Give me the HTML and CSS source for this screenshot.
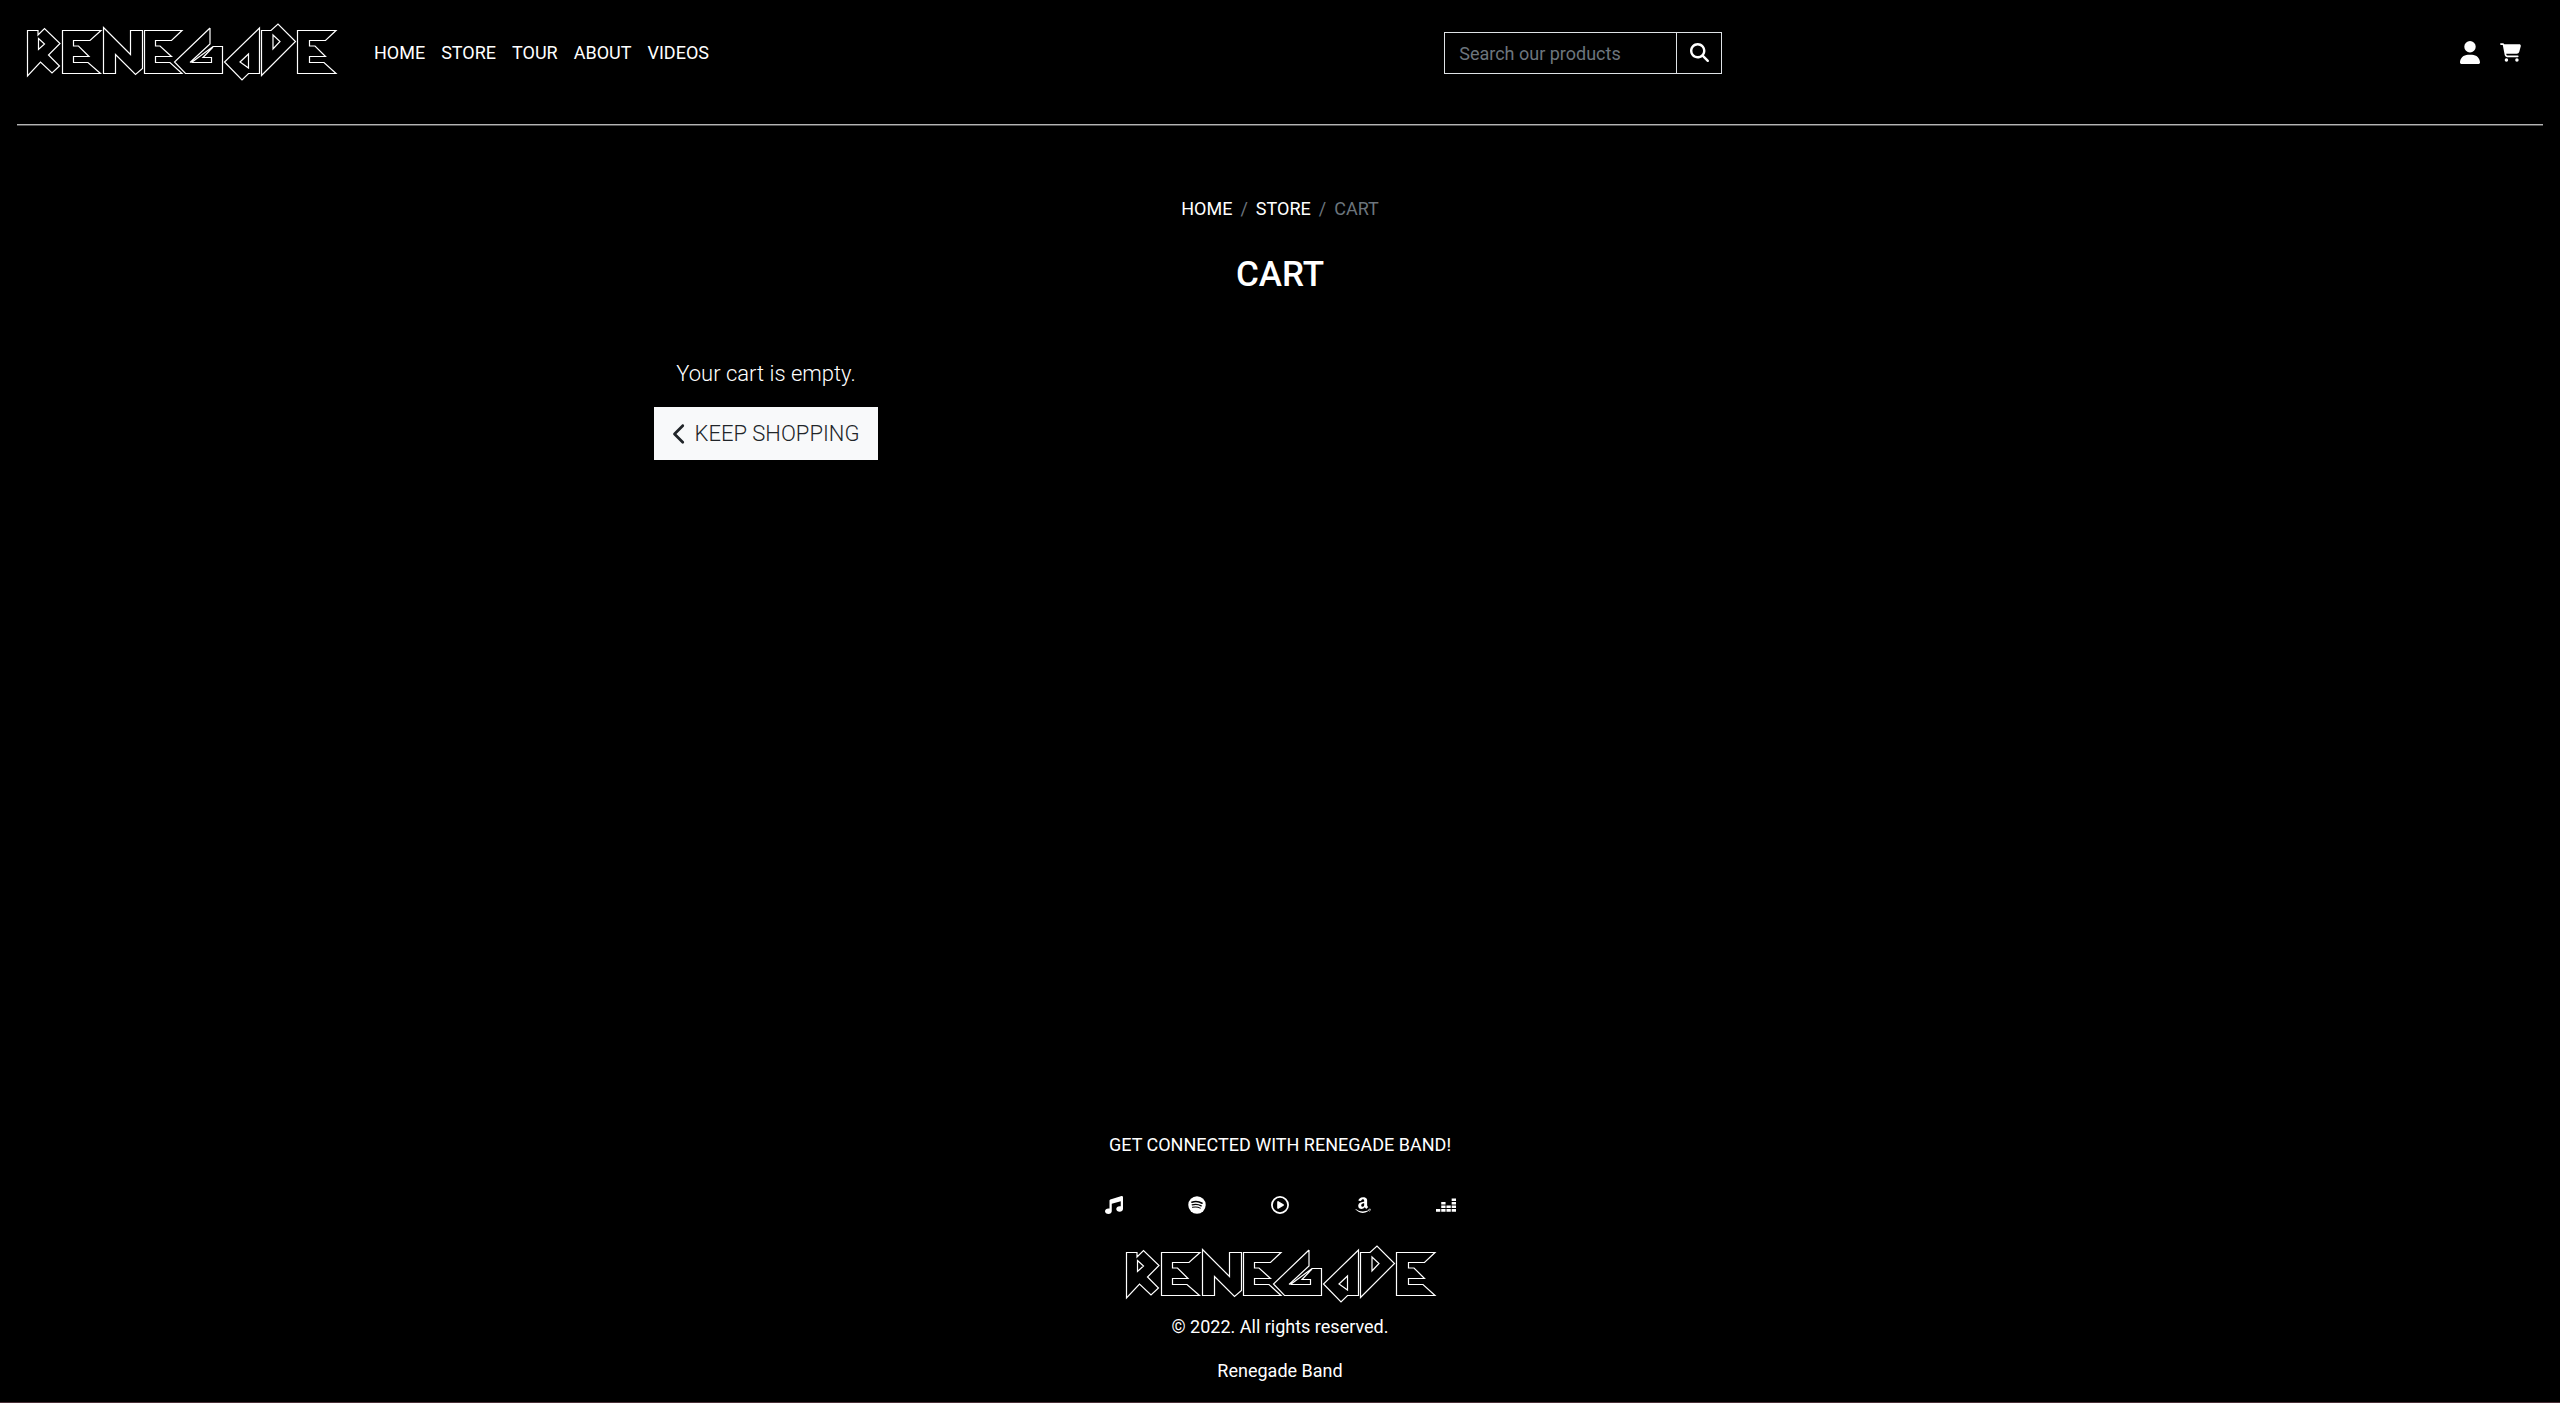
FILE: index.html
```html
<!DOCTYPE html>
<html lang="en">
<head>
<meta charset="utf-8">
<meta name="viewport" content="width=device-width, initial-scale=1">
<title>Cart | Renegade</title>
<link rel="stylesheet" href="styles.css">
</head>
<body>
<svg class="sprite" aria-hidden="true">
  <symbol id="logo" viewBox="0 0 318 64">
    <g fill="none" stroke="currentColor" stroke-width="1.2" stroke-miterlimit="3">
      <path d="M6.500 11.500H17V16L23.500 9.500L39 24.500L27.500 36L38.500 47L31 54L19.500 43L6.500 57ZM17.500 19.500L23.500 25L17.500 30.500Z"/>
      <path d="M41.500 11.500H80L69 21.500H52.500V27L57.500 27L68 37.500H52.500V43.500H67L79.500 54.500H41.500Z"/>
      <path d="M82.500 8.500L109.500 35.500V11.500H121.500V49.500L114.500 55.500L94.500 35.500V54.500H82.500Z"/>
      <path d="M123.500 11.500H161L150.500 21.500H134.500V27H139L150.500 37.500H134.500V43.500H149L161 54.500H123.500Z"/>
      <path d="M189 9L153.500 43L164.500 54.500H201.500V27.500H192L170.500 43.500H190.500V38.500H182L192 28M189 9V25L169 43.500"/>
      <path d="M238.500 9L203.500 43L221 61L227.500 54.500H238.500ZM227.500 35V49L219 43Z"/>
      <path d="M240.500 11.500H250L257 5L274.500 22.500L240.500 56.500ZM252 16L259 22.500L252 30Z"/>
      <path d="M276.500 11.500H315L304.500 21.500H288.500V27H294L304.500 37.500H288.500V43.500H303L315 54.500H276.500Z"/>
    </g>
  </symbol>
</svg>
<header class="header">
  <nav class="navbar" aria-label="Main">
    <div class="nav-start">
      <a class="brand" href="#" aria-label="Renegade"><svg class="logo" aria-hidden="true"><use href="#logo"/></svg></a>
      <ul class="nav-links">
        <li><a href="#">HOME</a></li>
        <li><a href="#">STORE</a></li>
        <li><a href="#">TOUR</a></li>
        <li><a href="#">ABOUT</a></li>
        <li><a href="#">VIDEOS</a></li>
      </ul>
    </div>
    <form class="search">
      <input type="search" placeholder="Search our products" aria-label="Search our products">
      <button type="submit" aria-label="Search"><svg viewBox="0 0 512 512" aria-hidden="true"><path d="M416 208c0 45.900-14.900 88.300-40 122.700L502.600 457.400c12.500 12.500 12.500 32.800 0 45.300s-32.800 12.500-45.300 0L330.700 376c-34.400 25.200-76.800 40-122.700 40C93.100 416 0 322.900 0 208S93.100 0 208 0S416 93.100 416 208zM208 352a144 144 0 1 0 0-288 144 144 0 1 0 0 288z"/></svg></button>
    </form>
    <div class="nav-end">
      <a href="#" aria-label="Account"><svg class="icon-user" viewBox="0 0 448 512" aria-hidden="true"><path d="M224 256A128 128 0 1 0 224 0a128 128 0 1 0 0 256zm-45.700 48C79.800 304 0 383.800 0 482.300C0 498.700 13.300 512 29.700 512H418.300c16.400 0 29.700-13.300 29.700-29.700C448 383.800 368.200 304 269.700 304H178.300z"/></svg></a>
      <a href="#" aria-label="Cart"><svg class="icon-cart" viewBox="0 0 576 512" aria-hidden="true"><path d="M0 24C0 10.700 10.700 0 24 0H69.500c22 0 41.500 12.800 50.600 32h411c26.300 0 45.500 25 38.600 50.400l-41 152.300c-8.500 31.400-37 53.300-69.500 53.300H170.700l5.400 28.500c2.200 11.300 12.100 19.500 23.600 19.500H488c13.300 0 24 10.700 24 24s-10.700 24-24 24H199.700c-34.600 0-64.300-24.600-70.700-58.500L77.400 54.500c-.7-3.800-4-6.500-7.900-6.500H24C10.700 48 0 37.300 0 24zM128 464a48 48 0 1 1 96 0 48 48 0 1 1-96 0zm336-48a48 48 0 1 1 0 96 48 48 0 1 1 0-96z"/></svg></a>
    </div>
  </nav>
</header>
<main class="main">
  <nav aria-label="Breadcrumb">
    <ol class="breadcrumb">
      <li><a href="#">HOME</a></li>
      <li><a href="#">STORE</a></li>
      <li aria-current="page">CART</li>
    </ol>
  </nav>
  <h1>CART</h1>
  <section class="cart">
    <div class="cart-empty">
      <p>Your cart is empty.</p>
      <button class="keep" type="button"><svg viewBox="0 0 320 512" aria-hidden="true"><path d="M9.400 233.400c-12.500 12.500-12.500 32.800 0 45.300l192 192c12.500 12.500 32.800 12.500 45.300 0s12.500-32.800 0-45.300L77.300 256 246.600 86.600c12.500-12.500 12.500-32.800 0-45.300s-32.800-12.500-45.300 0l-192 192z"/></svg>KEEP SHOPPING</button>
    </div>
  </section>
</main>
<footer class="footer">
  <p>GET CONNECTED WITH RENEGADE BAND!</p>
  <ul class="social">
    <li><a href="#" aria-label="Music"><svg viewBox="0 0 512 512" aria-hidden="true"><path d="M499.100 6.300c8.100 6 12.900 15.600 12.900 25.700v72V368c0 44.200-43 80-96 80s-96-35.800-96-80s43-80 96-80c11.200 0 22 1.600 32 4.600V147L192 223.800V432c0 44.200-43 80-96 80s-96-35.800-96-80s43-80 96-80c11.200 0 22 1.600 32 4.600V200 128c0-14.100 9.300-26.600 22.800-30.700l320-96c9.700-2.900 20.200-1.100 28.300 5z"/></svg></a></li>
    <li><a href="#" aria-label="Spotify"><svg viewBox="0 0 512 512" aria-hidden="true"><circle cx="256" cy="256" r="248"/><g fill="none" stroke="#000" stroke-linecap="round"><path stroke-width="43" d="M110 175C195 151 315 156 401 206"/><path stroke-width="36" d="M120 251C200 228 300 236 376 281"/><path stroke-width="29" d="M127 321C205 304 285 308 348 346"/></g></svg></a></li>
    <li><a href="#" aria-label="YouTube Music"><svg viewBox="0 0 512 512" aria-hidden="true"><circle cx="256" cy="256" r="230" fill="none" stroke="currentColor" stroke-width="50"/><path d="M188 147c-8 5-12 12-12 21v176c0 18 20 30 36 21l144-88c16-9 16-33 0-42l-144-88c-7-5-16-5-24 0z"/></svg></a></li>
    <li><a href="#" aria-label="Amazon"><svg viewBox="0 0 448 512" aria-hidden="true"><path d="M257.200 162.700c-48.700 1.800-169.500 15.500-169.500 117.500 0 109.500 138.300 114 183.500 43.200 6.500 10.200 35.400 37.500 45.300 46.800l56.800-56S341 288.900 341 261.400V114.300C341 89 316.500 32 228.700 32 140.700 32 94 87 94 136.300l73.500 6.800c16.300-49.500 54.200-49.500 54.200-49.500 40.700-.1 35.500 29.800 35.500 69.100zm0 86.800c0 80-84.200 68-84.200 17.200 0-47.200 50.500-56.700 84.200-57.800v40.600zm136 163.500c-7.700 10-70 67-174.500 67S34.200 408.500 9.700 379c-6.800-7.700 1-11.300 5.500-8.300C88.500 415.200 203 488.500 387.700 401c7.500-3.700 13.300 2 5.500 12zm39.800 2.200c-6.500 15.800-16 26.800-21.200 31-5.500 4.500-9.500 2.700-6.500-3.800s19.300-46.500 12.700-55c-6.500-8.300-37-4.300-48-3.200-10.800 1-13 2-14-.3-2.300-5.700 21.700-15.500 37.500-17.500 15.700-1.800 41-.8 46 5.700 3.700 5.100 0 27.100-6.500 43.100z"/></svg></a></li>
    <li><a href="#" aria-label="Deezer"><svg viewBox="0 0 576 512" aria-hidden="true"><path d="M451.500 244.700H576V172H451.500zm0-173.900v72.700H576V70.800zm0 275.100H576v-72.700H451.500zM0 447.100h124.500v-72.700H0zm150.500 0H275v-72.700H150.500zm150.500 0h124.500v-72.700H301zm150.500 0H576v-72.700H451.500zM301 345.900h124.500v-72.700H301zm-150.500 0H275v-72.700H150.500zm0-101.200H275V172H150.500z"/></svg></a></li>
  </ul>
  <a class="footer-brand" href="#" aria-label="Renegade"><svg class="logo" aria-hidden="true"><use href="#logo"/></svg></a>
  <p>© 2022. All rights reserved.</p>
  <p class="band"><a href="#">Renegade Band</a></p>
</footer>
</body>
</html>
```
FILE: styles.css
```css
* { box-sizing: border-box; }
body {
  margin: 0;
  min-height: 100vh;
  display: flex;
  flex-direction: column;
  background: #000;
  color: #fff;
  font: 400 18px/27px Roboto, sans-serif;
}
a { color: inherit; text-decoration: none; }
ul, ol { list-style: none; margin: 0; padding: 0; }
p, h1 { margin: 0; }
svg { display: block; fill: currentColor; }
.sprite { position: absolute; width: 0; height: 0; }
.logo { width: 318px; height: 64px; }

.header { padding: 0 17px; }
.navbar {
  display: grid;
  grid-template-columns: 56.5% 278px 1fr;
  align-items: start;
  height: 125px;
  border-bottom: 1px solid #b4b4b4;
  box-shadow: 0 1px #505050;
}
.nav-start { display: flex; align-items: flex-start; }
.brand { margin: 19px 0 0 4px; }
.nav-links { display: flex; gap: 16px; margin: 39px 0 0 35px; }
.search { display: flex; height: 42px; margin-top: 32px; }
.search input {
  flex: 1;
  min-width: 0;
  padding: 0 14px;
  border: 1px solid #dee2e6;
  border-radius: 0;
  background: #000;
  color: #fff;
  font: inherit;
  appearance: none;
}
.search input::placeholder { color: #6c757d; opacity: 1; }
.search button {
  width: 45px;
  padding: 0 0 2px 13px;
  border: 1px solid #dee2e6;
  border-left: 0;
  background: #000;
  color: #fff;
}
.search button svg { width: 19px; height: 19px; }
.nav-end { display: flex; justify-content: flex-end; align-items: center; gap: 20px; margin: 41px 22px 0 0; }
.icon-user { width: 20px; height: 23px; }
.icon-cart { width: 21px; height: 19px; }

.main { flex: 1; padding-top: 70px; }
.breadcrumb { display: flex; justify-content: center; }
.breadcrumb li + li::before { content: "/"; padding: 0 8px; color: #6c757d; }
.breadcrumb [aria-current] { color: #6c757d; }
h1 { margin-top: 32px; text-align: center; font-size: 35px; line-height: 42px; font-weight: 500; }
.cart { max-width: 1320px; margin: 61px auto 0; }
.cart-empty { width: 292px; text-align: center; font-size: 22px; line-height: 34px; font-weight: 300; }
.keep {
  display: inline-flex;
  align-items: center;
  gap: 8px;
  height: 53px;
  margin-top: 16px;
  padding: 0 19px;
  border: 0;
  background: #f8f9fa;
  color: #212529;
  font: 300 22px/34px Roboto, sans-serif;
}
.keep svg { width: 14px; height: 22px; }

.footer { display: flex; flex-direction: column; align-items: center; padding-bottom: 18px; border-bottom: 1px solid #4a3038; }
.social { display: flex; gap: 63px; margin-top: 38px; }
.social svg { width: 20px; height: 18px; }
.footer-brand { margin: 27px 3px 8px 0; }
.band { margin-top: 17px; }
```
